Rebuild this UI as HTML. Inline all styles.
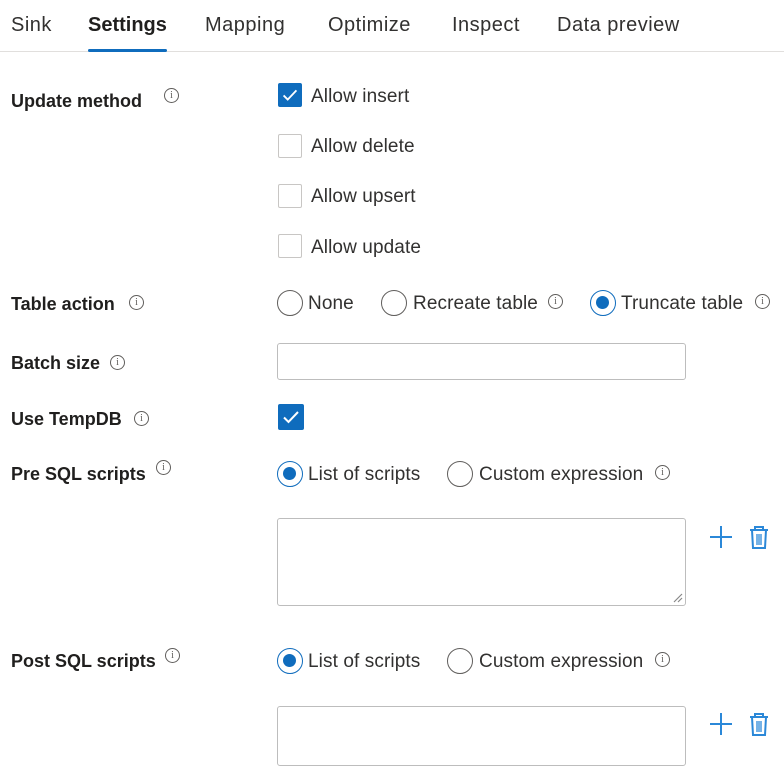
<!DOCTYPE html>
<html><head><style>
body{margin:0;width:784px;height:741px;overflow:hidden;background:#fff;font-family:"Liberation Sans",sans-serif;color:#323130;position:relative}
.a{position:absolute;white-space:nowrap}
.tab{font-size:20px;top:14px;color:#323130;letter-spacing:0.5px}
.lbl{font-size:18px;font-weight:bold;color:#201f1e;letter-spacing:0}
.t{font-size:19px;color:#323130;letter-spacing:0.1px}
.cb{position:absolute;width:24px;height:24px;border:1px solid #c8c6c4;border-radius:2px;box-sizing:border-box}
.cb.on{background:#0f6cbd;border-color:#0f6cbd}
.rd{position:absolute;width:26px;height:26px;border:1.5px solid #605e5c;border-radius:50%;box-sizing:border-box}
.rd.on{border-color:#0f6cbd}
.rd.on:after{content:"";position:absolute;left:5px;top:5px;width:13px;height:13px;border-radius:50%;background:#0f6cbd}
.inp{position:absolute;border:1.5px solid #bdbdbd;border-radius:3px;box-sizing:border-box}
.i{position:absolute;width:15px;height:15px;border:1.3px solid #605e5c;border-radius:50%;box-sizing:border-box;font-size:10px;line-height:13px;text-align:center;color:#605e5c;font-family:"Liberation Serif",serif}
</style></head><body>
<div class="a tab" style="left:11px">Sink</div>
<div class="a tab" style="left:88px;font-weight:bold;color:#201f1e;letter-spacing:0">Settings</div>
<div class="a tab" style="left:205px">Mapping</div>
<div class="a tab" style="left:328px">Optimize</div>
<div class="a tab" style="left:452px">Inspect</div>
<div class="a tab" style="left:557px">Data preview</div>
<div class="a" style="left:0;top:51px;width:784px;height:1px;background:#e1dfdd"></div>
<div class="a" style="left:88px;top:49px;width:79px;height:3px;background:#0f6cbd;border-radius:2px"></div>

<svg width="0" height="0" style="position:absolute"><defs><symbol id="ck" viewBox="0 0 24 24"><path d="M5 12.5l4.5 4.5L19 7" fill="none" stroke="#fff" stroke-width="2"/></symbol></defs></svg>

<div class="a lbl" style="left:11px;top:91px">Update method</div><div class="i" style="left:164px;top:88px">i</div>
<div class="cb on" style="left:278px;top:83px"><svg width="22" height="22"><use href="#ck"/></svg></div><div class="a t" style="left:311px;top:86px">Allow insert</div>
<div class="cb" style="left:278px;top:134px"></div><div class="a t" style="left:311px;top:136px">Allow delete</div>
<div class="cb" style="left:278px;top:184px"></div><div class="a t" style="left:311px;top:186px">Allow upsert</div>
<div class="cb" style="left:278px;top:234px"></div><div class="a t" style="left:311px;top:237px">Allow update</div>

<div class="a lbl" style="left:11px;top:294px">Table action</div><div class="i" style="left:129px;top:295px">i</div>
<div class="rd" style="left:277px;top:290px"></div><div class="a t" style="left:308px;top:293px">None</div>
<div class="rd" style="left:381px;top:290px"></div><div class="a t" style="left:413px;top:293px">Recreate table</div><div class="i" style="left:548px;top:294px">i</div>
<div class="rd on" style="left:590px;top:290px"></div><div class="a t" style="left:621px;top:293px">Truncate table</div><div class="i" style="left:755px;top:294px">i</div>

<div class="a lbl" style="left:11px;top:353px">Batch size</div><div class="i" style="left:110px;top:355px">i</div>
<div class="inp" style="left:277px;top:343px;width:409px;height:37px"></div>

<div class="a lbl" style="left:11px;top:409px">Use TempDB</div><div class="i" style="left:134px;top:411px">i</div>
<div class="cb on" style="left:278px;top:404px;width:26px;height:26px"><svg width="24" height="24"><use href="#ck"/></svg></div>

<div class="a lbl" style="left:11px;top:464px">Pre SQL scripts</div><div class="i" style="left:156px;top:460px">i</div>
<div class="rd on" style="left:277px;top:461px"></div><div class="a t" style="left:308px;top:464px">List of scripts</div>
<div class="rd" style="left:447px;top:461px"></div><div class="a t" style="left:479px;top:464px">Custom expression</div><div class="i" style="left:655px;top:465px">i</div>
<div class="inp" style="left:277px;top:518px;width:409px;height:88px"><svg style="position:absolute;right:2px;bottom:2px" width="12" height="12"><path d="M11 3L3 11M11 7L7 11" stroke="#888" stroke-width="1.2"/></svg></div>

<div class="a lbl" style="left:11px;top:651px">Post SQL scripts</div><div class="i" style="left:165px;top:648px">i</div>
<div class="rd on" style="left:277px;top:648px"></div><div class="a t" style="left:308px;top:651px">List of scripts</div>
<div class="rd" style="left:447px;top:648px"></div><div class="a t" style="left:479px;top:651px">Custom expression</div><div class="i" style="left:655px;top:652px">i</div>
<div class="inp" style="left:277px;top:706px;width:409px;height:60px"></div>

<svg class="a" style="left:708px;top:525px" width="64" height="26"><path d="M2 12h22M13 1v22" stroke="#2b88d8" stroke-width="2"/><g fill="none" stroke="#2b88d8" stroke-width="2"><path d="M42 5h18M47 5V2h8v3M44 5l1 18h12l1-18"/><path d="M49 9v11M51 9v11M53 9v11" stroke-width="1.3"/></g></svg>
<svg class="a" style="left:708px;top:712px" width="64" height="26"><path d="M2 12h22M13 1v22" stroke="#2b88d8" stroke-width="2"/><g fill="none" stroke="#2b88d8" stroke-width="2"><path d="M42 5h18M47 5V2h8v3M44 5l1 18h12l1-18"/><path d="M49 9v11M51 9v11M53 9v11" stroke-width="1.3"/></g></svg>
</body></html>
